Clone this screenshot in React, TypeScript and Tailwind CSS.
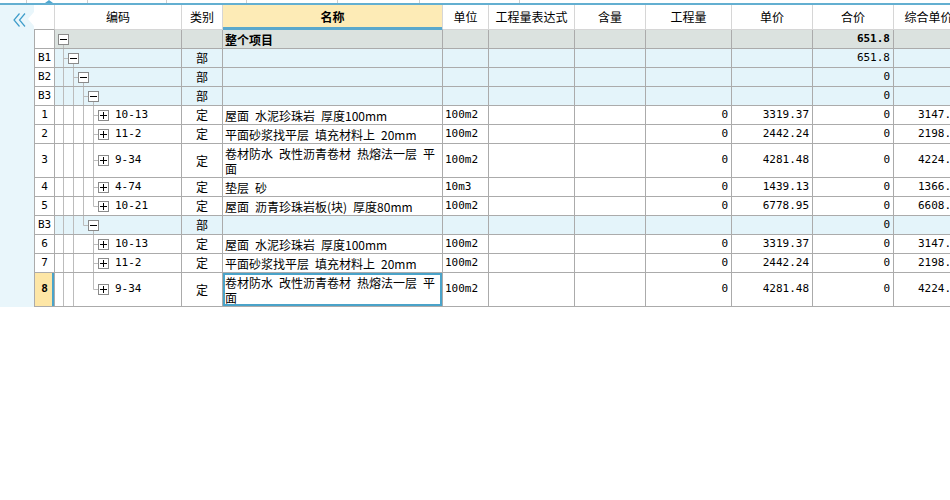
import React from "react";

const CJK = "font-['Noto_Sans_CJK_SC',sans-serif]";
const MONO = "font-['DejaVu_Sans_Mono',monospace]";
const COLS = "grid grid-cols-[21px_127px_41px_220px_46px_86px_71px_86px_81px_81px_70px]";

type Guide = { l: number; half?: boolean };

function Tree({ level, h, plus, guides, own }: { level: number; h: number; plus: boolean; guides: Guide[]; own?: boolean }) {
  const top = Math.floor(h / 2) - 5;
  const cy = top + 5.5;
  const bx = 3 + 10 * level;
  const w = bx + 12;
  const lc = "#bcbcbc";
  return (
    <svg width={w} height={h} className="block shrink-0">
      {guides.map((g, i) => (
        <line key={i} x1={8.5 + 10 * g.l} x2={8.5 + 10 * g.l} y1={0} y2={g.half ? cy : h} stroke={lc} />
      ))}
      {level > 0 && <line x1={8.5 + 10 * (level - 1)} x2={bx} y1={cy} y2={cy} stroke={lc} />}
      {own && <line x1={bx + 5.5} x2={bx + 5.5} y1={top + 11} y2={h} stroke={lc} />}
      <rect x={bx + 0.5} y={top + 0.5} width={10} height={10} fill="#ffffff" stroke="#8a8a8a" />
      <line x1={bx + 2} x2={bx + 9} y1={cy} y2={cy} stroke="#000" />
      {plus && <line x1={bx + 5.5} x2={bx + 5.5} y1={top + 2} y2={top + 9} stroke="#000" />}
    </svg>
  );
}

type Row = {
  num: string;
  level: number;
  plus: boolean;
  guides: Guide[];
  own?: boolean;
  code?: string;
  cat?: string;
  name?: string[];
  unit?: string;
  qty?: string;
  price?: string;
  total?: string;
  comp?: string;
  h: number;
  kind: "gray" | "blue" | "white";
  sel?: boolean;
  bold?: boolean;
};

const sp = (s: string) => s.replace(/ /g, "\u2002");

const N1 = ["屋面 水泥珍珠岩 厚度100mm"];
const N2 = ["平面砂浆找平层 填充材料上 20mm"];
const N3 = ["卷材防水 改性沥青卷材 热熔法一层 平", "面"];
const N4 = ["垫层 砂"];
const N5 = ["屋面 沥青珍珠岩板(块) 厚度80mm"];

const full3: Guide[] = [{ l: 0 }, { l: 1 }, { l: 2 }, { l: 3 }];

const rows: Row[] = [
  { num: "", level: 0, plus: false, guides: [], own: true, name: ["整个项目"], total: "651.8", h: 19, kind: "gray", bold: true },
  { num: "B1", level: 1, plus: false, guides: [{ l: 0 }], own: true, cat: "部", total: "651.8", h: 19, kind: "blue" },
  { num: "B2", level: 2, plus: false, guides: [{ l: 0 }, { l: 1 }], own: true, cat: "部", total: "0", h: 19, kind: "blue" },
  { num: "B3", level: 3, plus: false, guides: [{ l: 0 }, { l: 1 }, { l: 2 }], own: true, cat: "部", total: "0", h: 19, kind: "blue" },
  { num: "1", level: 4, plus: true, guides: full3, code: "10-13", cat: "定", name: N1, unit: "100m2", qty: "0", price: "3319.37", total: "0", comp: "3147.25", h: 19, kind: "white" },
  { num: "2", level: 4, plus: true, guides: full3, code: "11-2", cat: "定", name: N2, unit: "100m2", qty: "0", price: "2442.24", total: "0", comp: "2198.02", h: 19, kind: "white" },
  { num: "3", level: 4, plus: true, guides: full3, code: "9-34", cat: "定", name: N3, unit: "100m2", qty: "0", price: "4281.48", total: "0", comp: "4224.36", h: 34, kind: "white" },
  { num: "4", level: 4, plus: true, guides: full3, code: "4-74", cat: "定", name: N4, unit: "10m3", qty: "0", price: "1439.13", total: "0", comp: "1366.17", h: 19, kind: "white" },
  { num: "5", level: 4, plus: true, guides: [{ l: 0 }, { l: 1 }, { l: 2 }, { l: 3, half: true }], code: "10-21", cat: "定", name: N5, unit: "100m2", qty: "0", price: "6778.95", total: "0", comp: "6608.41", h: 19, kind: "white" },
  { num: "B3", level: 3, plus: false, guides: [{ l: 0 }, { l: 1 }, { l: 2, half: true }], own: true, cat: "部", total: "0", h: 19, kind: "blue" },
  { num: "6", level: 4, plus: true, guides: [{ l: 0 }, { l: 1 }, { l: 3 }], code: "10-13", cat: "定", name: N1, unit: "100m2", qty: "0", price: "3319.37", total: "0", comp: "3147.25", h: 19, kind: "white" },
  { num: "7", level: 4, plus: true, guides: [{ l: 0 }, { l: 1 }, { l: 3 }], code: "11-2", cat: "定", name: N2, unit: "100m2", qty: "0", price: "2442.24", total: "0", comp: "2198.02", h: 19, kind: "white" },
  { num: "8", level: 4, plus: true, guides: [{ l: 0 }, { l: 1 }, { l: 3, half: true }], code: "9-34", cat: "定", name: N3, unit: "100m2", qty: "0", price: "4281.48", total: "0", comp: "4224.36", h: 34, kind: "white", sel: true },
];

const headers = ["", "编码", "类别", "名称", "单位", "工程量表达式", "含量", "工程量", "单价", "合价", "综合单价"];

function TableRow({ r }: { r: Row }) {
  const bg = r.kind === "gray" ? "bg-[#dbe2df]" : r.kind === "blue" ? "bg-[#e4f4fa]" : "bg-white";
  const cell = `border-r border-b border-[#ababab] ${bg} flex items-center overflow-hidden`;
  const num = `border-r border-b border-[#ababab] flex items-center justify-end pr-[3px] ${MONO} text-[11px] text-black ${bg}`;
  const hClass = r.h === 34 ? "h-[34px]" : "h-[19px]";
  return (
    <div className={`${COLS} ${hClass}`}>
      <div
        className={`border-l border-r border-b border-[#ababab] flex items-center justify-center ${MONO} text-[11px] text-black ${
          r.sel ? "bg-[#fde6a6] font-bold shadow-[inset_-2px_0_0_#4aa3c9]" : "bg-white"
        }`}
      >
        {r.num}
      </div>
      <div className={`${cell} items-stretch`}>
        <Tree level={r.level} h={r.h - 1} plus={r.plus} guides={r.guides} own={r.own} />
        {r.code && <span className={`ml-[5px] self-center ${MONO} text-[11px] text-black`}>{r.code}</span>}
      </div>
      <div className={`${cell} justify-center ${CJK} text-[12px] text-black`}>{r.cat}</div>
      <div
        className={`${cell} pl-[2px] ${CJK} text-[12px] leading-[15px] text-black ${r.bold ? "font-bold" : ""} ${
          r.sel ? "shadow-[inset_0_0_0_2px_#4aa3c9]" : ""
        }`}
      >
        {r.name && (
          <div className="flex flex-col whitespace-nowrap">
            {r.name.map((t, i) => (
              <div key={i}>{sp(t)}</div>
            ))}
          </div>
        )}
      </div>
      <div className={`${cell} pl-[2px] ${MONO} text-[11px] text-black`}>{r.unit}</div>
      <div className={cell}></div>
      <div className={cell}></div>
      <div className={num}>{r.qty}</div>
      <div className={num}>{r.price}</div>
      <div className={`${num} ${r.bold ? "font-bold" : ""}`}>{r.total}</div>
      <div className={`${num} justify-start pl-[24px]`}>{r.comp}</div>
    </div>
  );
}

export default function App() {
  const tabs = [27, 61, 79, 80, 91, 82, 100];
  return (
    <div className="w-[950px] h-[500px] overflow-hidden bg-white relative">
      <div className="h-[3px] flex relative">
        {tabs.map((w, i) => (
          <div key={i} className="h-full border-r border-[#cfcfcf] shrink-0" style={{ width: w }} />
        ))}
        <div className="absolute left-[45px] top-0 w-0 h-0 border-l-[4px] border-r-[4px] border-b-[3px] border-l-transparent border-r-transparent border-b-[#4fa6cf]" />
      </div>
      <div className="h-[2px] bg-[#63afd1]" />
      <div className="flex items-stretch">
        <div className="w-[34px] shrink-0 bg-[#e9f6fb] relative">
          <svg width="13" height="14" className="absolute left-[13px] top-[8px]" viewBox="0 0 13 14">
            <polyline points="6.5,0.5 1,7 6.5,13.5" fill="none" stroke="#3f9dca" strokeWidth="1.2" />
            <polyline points="12,0.5 6.5,7 12,13.5" fill="none" stroke="#3f9dca" strokeWidth="1.2" />
          </svg>
          <svg width="6" height="14" className="absolute right-0 top-[7px]" viewBox="0 0 6 14">
            <polygon points="6,0 0,7 6,14" fill="#ffffff" />
          </svg>
        </div>
        <div className="shrink-0 w-max">
          <div className={`${COLS} h-[25px]`}>
            {headers.map((h, i) => (
              <div
                key={i}
                className={`flex items-center justify-center border-r border-b border-[#d6d6d6] ${CJK} text-[12px] text-black whitespace-nowrap overflow-hidden ${
                  i === 3 ? "bg-[#fdebb6] font-bold shadow-[inset_0_-2px_0_#5aa8cc] border-b-[#5aa8cc]" : "bg-white"
                } ${i === 0 ? "border-b-[#ababab]" : ""}`}
              >
                {h}
              </div>
            ))}
          </div>
          {rows.map((r, i) => (
            <TableRow key={i} r={r} />
          ))}
        </div>
      </div>
    </div>
  );
}
